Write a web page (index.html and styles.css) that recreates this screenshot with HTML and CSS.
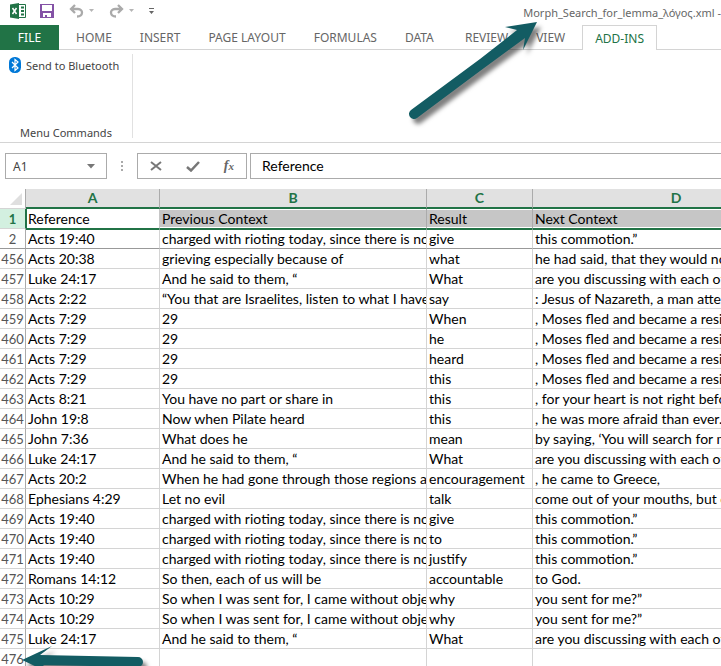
FILE: index.html
```html
<!DOCTYPE html>
<html lang="en">
<head>
  <meta charset="UTF-8" />
  <meta name="viewport" content="width=device-width, initial-scale=1.0" />
  <title>Morph_Search_for_lemma_λόγος.xml</title>
  <link rel="stylesheet" href="styles.css">
</head>
<body>
  <header class="title-bar">
    <div class="quick-access">
      <svg class="excel-logo" width="16" height="16" viewBox="0 0 16 16" aria-hidden="true">
        <path fill="#217346" d="M0 1.5 9 0v16L0 14.500z"/>
        <path fill="none" stroke="#217346" d="M9 1.500h6.500v13H9"/>
        <path fill="none" stroke="#217346" stroke-width="2" d="M11 4.500h3M11 8h3M11 11.500h3"/>
        <path fill="none" stroke="#fff" stroke-width="1.500" d="M2.500 5 6.500 11M6.500 5 2.500 11"/>
      </svg>
      <button class="icon-btn save" aria-label="Save">
        <svg width="14" height="14" viewBox="0 0 14 14">
          <path fill="#8452a6" d="M0 0h14v14H0z"/>
          <path fill="#fff" d="M2 1h10v6H2zM3 9h8v4H7v-2H5v2H3z"/>
        </svg>
      </button>
      <button class="icon-btn undo" aria-label="Undo">
        <svg width="25" height="14" viewBox="0 0 25 14">
          <path fill="none" stroke="#aaa" stroke-width="2.300" d="M6 1 2 5l4 4M2 5h7c5.500 0 5.500 7.500-1 7.500"/>
          <path fill="#b5b5b5" d="M20 5h5l-2.500 3z"/>
        </svg>
      </button>
      <button class="icon-btn redo" aria-label="Redo">
        <svg width="25" height="14" viewBox="0 0 25 14">
          <path fill="none" stroke="#aaa" stroke-width="2.300" d="M9 1l4 4-4 4M13 5H6c-5.500 0-5.500 7.500 1 7.500"/>
          <path fill="#b5b5b5" d="M20 5h5l-2.500 3z"/>
        </svg>
      </button>
      <button class="icon-btn" aria-label="Customize toolbar">
        <svg width="5" height="8" viewBox="0 0 5 8">
          <path fill="#666" d="M0 1h5v1H0zM0 4h5L2.500 7z"/>
        </svg>
      </button>
    </div>
    <h1 class="file-name">Morph_Search_for_lemma_λόγος.xml -</h1>
  </header>

  <nav class="tabs">
    <button class="tab file">FILE</button>
    <button class="tab">HOME</button>
    <button class="tab">INSERT</button>
    <button class="tab">PAGE LAYOUT</button>
    <button class="tab">FORMULAS</button>
    <button class="tab">DATA</button>
    <button class="tab">REVIEW</button>
    <button class="tab">VIEW</button>
    <button class="tab active">ADD-INS</button>
  </nav>

  <section class="ribbon">
    <div class="group">
      <button class="bluetooth">
        <svg width="12" height="16" viewBox="0 0 12 16" aria-hidden="true">
          <rect width="12" height="16" rx="5.500" fill="#0078d7"/>
          <path fill="none" stroke="#fff" stroke-width="1.200" d="M3 5l6 6-3 2.500v-11L9 5l-6 6"/>
        </svg>
        Send to Bluetooth
      </button>
      <p class="group-name">Menu Commands</p>
    </div>
  </section>

  <section class="formula-bar">
    <button class="name-box">A1
      <svg width="8" height="5" viewBox="0 0 8 5" aria-hidden="true"><path fill="#777" d="M0 0h8L4 4.500z"/></svg>
    </button>
    <svg class="dots" width="2" height="10" viewBox="0 0 2 10" aria-hidden="true">
      <path fill="#aaa" d="M0 0h2v2H0zM0 4h2v2H0zM0 8h2v2H0z"/>
    </svg>
    <div class="formula-buttons">
      <button class="icon-btn" aria-label="Cancel">
        <svg width="12" height="10" viewBox="0 0 12 10"><path fill="none" stroke="#777" stroke-width="2" d="M1 1l10 8M11 1L1 9"/></svg>
      </button>
      <button class="icon-btn" aria-label="Enter">
        <svg width="14" height="11" viewBox="0 0 14 11"><path fill="none" stroke="#777" stroke-width="2.500" d="M1 6l4 3.500L13 1"/></svg>
      </button>
      <button class="icon-btn fx" aria-label="Insert function">f<span>x</span></button>
    </div>
    <input class="formula" type="text" value="Reference" aria-label="Formula">
  </section>

  <main class="sheet">
    <table>
      <colgroup>
        <col class="col-num"><col class="col-a"><col class="col-b"><col class="col-c"><col class="col-d">
      </colgroup>
      <thead>
        <tr>
          <th class="corner"><svg width="12" height="12" viewBox="0 0 12 12" aria-hidden="true"><path fill="#dfdfdf" d="M12 0v12H0z"/></svg></th>
          <th>A</th><th>B</th><th>C</th><th>D</th>
        </tr>
      </thead>
      <tbody>
        <tr class="selected"><th>1</th><td>Reference</td><td>Previous Context</td><td>Result</td><td>Next Context</td></tr>
        <tr class="frozen"><th>2</th><td>Acts 19:40</td><td>charged with rioting today, since there is no</td><td>give</td><td>this commotion.”</td></tr>
        <tr><th>456</th><td>Acts 20:38</td><td>grieving especially because of</td><td>what</td><td>he had said, that they would not</td></tr>
        <tr><th>457</th><td>Luke 24:17</td><td>And he said to them, “</td><td>What</td><td>are you discussing with each other</td></tr>
        <tr><th>458</th><td>Acts 2:22</td><td>“You that are Israelites, listen to what I have</td><td>say</td><td>: Jesus of Nazareth, a man attested</td></tr>
        <tr><th>459</th><td>Acts 7:29</td><td>29</td><td>When</td><td>, Moses fled and became a resident</td></tr>
        <tr><th>460</th><td>Acts 7:29</td><td>29</td><td>he</td><td>, Moses fled and became a resident</td></tr>
        <tr><th>461</th><td>Acts 7:29</td><td>29</td><td>heard</td><td>, Moses fled and became a resident</td></tr>
        <tr><th>462</th><td>Acts 7:29</td><td>29</td><td>this</td><td>, Moses fled and became a resident</td></tr>
        <tr><th>463</th><td>Acts 8:21</td><td>You have no part or share in</td><td>this</td><td>, for your heart is not right before</td></tr>
        <tr><th>464</th><td>John 19:8</td><td>Now when Pilate heard</td><td>this</td><td>, he was more afraid than ever.</td></tr>
        <tr><th>465</th><td>John 7:36</td><td>What does he</td><td>mean</td><td>by saying, ‘You will search for me</td></tr>
        <tr><th>466</th><td>Luke 24:17</td><td>And he said to them, “</td><td>What</td><td>are you discussing with each other</td></tr>
        <tr><th>467</th><td>Acts 20:2</td><td>When he had gone through those regions and</td><td>encouragement</td><td>, he came to Greece,</td></tr>
        <tr><th>468</th><td>Ephesians 4:29</td><td>Let no evil</td><td>talk</td><td>come out of your mouths, but only</td></tr>
        <tr><th>469</th><td>Acts 19:40</td><td>charged with rioting today, since there is no</td><td>give</td><td>this commotion.”</td></tr>
        <tr><th>470</th><td>Acts 19:40</td><td>charged with rioting today, since there is no</td><td>to</td><td>this commotion.”</td></tr>
        <tr><th>471</th><td>Acts 19:40</td><td>charged with rioting today, since there is no</td><td>justify</td><td>this commotion.”</td></tr>
        <tr><th>472</th><td>Romans 14:12</td><td>So then, each of us will be</td><td>accountable</td><td>to God.</td></tr>
        <tr><th>473</th><td>Acts 10:29</td><td>So when I was sent for, I came without objection</td><td>why</td><td>you sent for me?”</td></tr>
        <tr><th>474</th><td>Acts 10:29</td><td>So when I was sent for, I came without objection</td><td>why</td><td>you sent for me?”</td></tr>
        <tr><th>475</th><td>Luke 24:17</td><td>And he said to them, “</td><td>What</td><td>are you discussing with each other</td></tr>
        <tr><th>476</th><td></td><td></td><td></td><td></td></tr>
      </tbody>
    </table>
    <svg class="arrow arrow-row" width="136" height="30" viewBox="0 0 136 30" aria-hidden="true">
      <path fill="#135c63" d="M0 14 30 0 18 9 116 11a5 5 0 0 1 0 10L21 19 30 28z"/>
    </svg>
  </main>

  <svg class="arrow arrow-title" width="140" height="110" viewBox="0 0 140 110" aria-hidden="true">
    <path fill="#135c63" d="M129 2 97 7 109 10 72 39 3 90a5 5 0 0 0 6 8L72 51 117 18 115 30z"/>
  </svg>
</body>
</html>
```

FILE: styles.css
```css
* {
  margin: 0;
  padding: 0;
  box-sizing: border-box;
}
body {
  position: relative;
  height: 100vh;
  overflow: hidden;
  background: #fff;
  color: #444;
  font-family: "Noto Sans", "Open Sans", sans-serif;
  font-size: 12px;
}
button {
  border: none;
  background: none;
  color: inherit;
  font: inherit;
}
svg {
  display: block;
}

/* Title bar */
.title-bar {
  display: flex;
  justify-content: space-between;
  height: 25px;
  overflow: hidden;
}
.quick-access {
  display: flex;
  align-items: center;
  height: 22px;
  padding-left: 10px;
}
.save {
  margin: 0 15px 0 14px;
}
.redo {
  margin: 0 15px;
}
.file-name {
  color: #666;
  font-size: 11px;
  font-weight: normal;
  line-height: 26px;
  white-space: nowrap;
}

/* Ribbon tabs */
.tabs {
  display: flex;
  height: 25px;
  border-bottom: 1px solid #d4d4d4;
}
.tab {
  min-width: 60px;
  height: 25px;
  padding: 0 14px;
  color: #666;
  text-align: left;
  white-space: nowrap;
}
.tab.file {
  min-width: 59px;
  margin-right: 3px;
  background: #217346;
  color: #fff;
  text-align: center;
}
.tab.active {
  border: 1px solid #d4d4d4;
  border-bottom: none;
  padding: 0 12px;
  background: #fff;
  color: #217346;
}

/* Ribbon */
.ribbon {
  height: 93px;
  padding-top: 4px;
  border-bottom: 1px solid #d4d4d4;
  font-size: 11px;
}
.group {
  display: flex;
  flex-direction: column;
  justify-content: space-between;
  width: 133px;
  height: 84px;
  border-right: 1px solid #e1e1e1;
}
.bluetooth {
  display: flex;
  align-items: center;
  gap: 5px;
  height: 22px;
  padding-left: 9px;
  white-space: nowrap;
}
.group-name {
  line-height: 10px;
  text-align: center;
}

/* Formula bar */
.formula-bar {
  display: flex;
  align-items: center;
  height: 46px;
  padding-left: 5px;
}
.name-box,
.formula-buttons,
.formula {
  height: 26px;
  border: 1px solid #ababab;
}
.name-box {
  display: flex;
  align-items: center;
  justify-content: space-between;
  width: 102px;
  padding: 0 11px 0 7px;
}
.dots {
  margin: 0 14px;
}
.formula-buttons {
  display: flex;
  align-items: center;
  justify-content: space-between;
  width: 110px;
  margin-right: 3px;
  padding: 0 12px;
}
.fx {
  color: #666;
  font: italic bold 14px "Liberation Serif", serif;
}
.fx span {
  font-size: 11px;
}
.formula {
  flex: 1;
  min-width: 0;
  border-right: none;
  padding: 0 0 2px 11px;
  color: #000;
  font-family: Lato, sans-serif;
  font-size: 14px;
}

/* Sheet */
.sheet {
  position: relative;
  overflow: hidden;
}
table {
  width: 100%;
  min-width: 820px;
  border-spacing: 0;
  table-layout: fixed;
  color: #000;
  font-family: Lato, sans-serif;
  font-size: 14px;
  line-height: 18px;
}
.col-num {
  width: 26px;
}
.col-a {
  width: 134px;
}
.col-b {
  width: 267px;
}
.col-c {
  width: 106px;
}
th,
td {
  height: 20px;
  overflow: hidden;
  border-right: 1px solid #d4d4d4;
  border-bottom: 1px solid #d4d4d4;
  white-space: nowrap;
}
td {
  padding-left: 2px;
}
thead th {
  border-right-color: #ababab;
  border-bottom: 2px solid #217346;
  background: #e1e1e1;
  color: #217346;
}
thead .corner {
  padding-left: 10px;
  border-bottom: 1px solid #d4d4d4;
  background: #fff;
}
tbody th {
  border-right-color: #ababab;
  color: #555;
  font-size: 13px;
  font-weight: normal;
}
.selected th {
  border-right: 1px solid #217346;
  background: #d3f0e0;
  color: #217346;
  font-weight: bold;
}
.selected td {
  border-right-color: #ababab;
  border-bottom-color: #217346;
  background: #c6c6c6;
  box-shadow: inset 0 1px #fff, inset 0 -1px #fff;
}
.selected td:nth-child(2) {
  border-right-color: #c6c6c6;
  background: #fff;
  box-shadow: inset 1px 0 #217346;
}
.frozen th,
.frozen td {
  border-bottom-color: #999;
}
.frozen td {
  border-top: 1px solid #217346;
}

/* Arrows lie over the window */
.arrow {
  position: absolute;
  filter: drop-shadow(4px 5px 2px rgba(0, 0, 0, 0.5));
}
.arrow-title {
  top: 20px;
  left: 408px;
}
.arrow-row {
  top: 457px;
  left: 22px;
}
```
